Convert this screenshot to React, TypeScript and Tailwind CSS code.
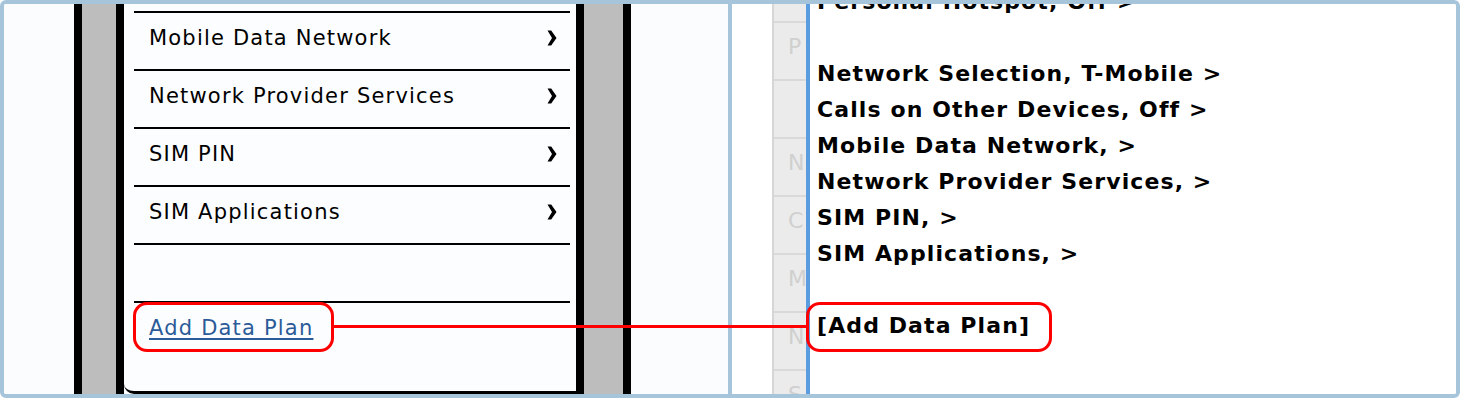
import type { ReactNode } from 'react'

const FONT = "font-['DejaVu_Sans','Liberation_Sans',sans-serif]"

const phoneRows = ['Mobile Data Network', 'Network Provider Services', 'SIM PIN', 'SIM Applications']

const ghostRows = ['P', '', 'N', 'C', 'M', 'N', 'S']

const wireLines = [
  'Personal Hotspot, Off >',
  '',
  'Network Selection, T-Mobile >',
  'Calls on Other Devices, Off >',
  'Mobile Data Network, >',
  'Network Provider Services, >',
  'SIM PIN, >',
  'SIM Applications, >',
  '',
]

function Chevron() {
  return (
    <svg width="10" height="16" viewBox="0 0 10 16" className="shrink-0">
      <path d="M0.5 0.5 L4.2 0.5 L9.5 8 L4.2 15.5 L0.5 15.5 L5 8 Z" fill="#000" />
    </svg>
  )
}

function PhoneRail({ gray, children }: { gray: string; children?: ReactNode }) {
  return (
    <div className="flex h-full shrink-0">
      <div className="w-[8px] bg-black" />
      <div className={`${gray} bg-[#bdbdbd]`}>{children}</div>
      <div className="w-[8px] bg-black" />
    </div>
  )
}

function PhoneScreen() {
  return (
    <div className="flex h-full w-[452px] flex-col rounded-bl-[10px] border-b-[3px] border-black bg-[#fcfdff] pt-[7px] pr-[6px] pl-[10px]">
      {phoneRows.map((r) => (
        <div
          key={r}
          className="flex h-[58px] items-center justify-between border-t-2 border-black pr-[13px] pb-[6px] pl-[15px]"
        >
          <span className="text-[21px] leading-none tracking-[1.2px] text-black">{r}</span>
          <Chevron />
        </div>
      ))}
      <div className="h-[58px] border-t-2 border-black" />
      <div className="flex h-[52px] items-center border-t-2 border-black pl-[15px]">
        <a className="text-[21px] leading-none tracking-[1.2px] text-[#2b5b98] underline underline-offset-[3px]">
          Add Data Plan
        </a>
      </div>
    </div>
  )
}

export default function App() {
  return (
    <div className={`relative h-[398px] w-[1460px] overflow-hidden rounded-[6px] border-4 border-[#a6c5da] ${FONT}`}>
      <div className="flex h-full">
        {/* mockup side */}
        <div className="flex h-full w-[724px] bg-[#fbfcfe] pl-[70px]">
          <PhoneRail gray="w-[34px]" />
          <PhoneScreen />
          <PhoneRail gray="w-[39px]" />
        </div>
        <div className="h-full w-[4px] bg-[#a6c5da]" />
        {/* text side */}
        <div className="flex h-full flex-1 bg-white pl-[40px]">
          <div className="h-full w-[34px] overflow-hidden border-l-2 border-[#d6d6d6] bg-[#ebebeb] pt-[17px]">
            {ghostRows.map((g, i) => (
              <div
                key={i}
                className="flex h-[58px] items-center border-t-2 border-[#d9d9d9] pb-[8px] pl-[14px] text-[22px] leading-none text-[#d0d0d0]"
              >
                {g}
              </div>
            ))}
          </div>
          <div className="h-full w-[4px] bg-[#5b9be0]" />
          <div className="-mt-[20px] pl-[7px] text-[22px] leading-[36px] font-bold tracking-[1.1px] text-black">
            {wireLines.map((l, i) => (
              <div key={i} className="h-[36px] whitespace-nowrap">
                {l}
              </div>
            ))}
            <div className="h-[36px] whitespace-nowrap">[Add Data Plan]</div>
          </div>
        </div>
      </div>
      {/* annotation overlays */}
      <div className="absolute top-[298px] left-[129px] h-[50px] w-[201px] rounded-[14px] border-[3px] border-[#f00]" />
      <div className="absolute top-[321px] left-[330px] h-[3px] w-[472px] bg-[#f00]" />
      <div className="absolute top-[298px] left-[802px] h-[50px] w-[246px] rounded-[14px] border-[3px] border-[#f00]" />
    </div>
  )
}
